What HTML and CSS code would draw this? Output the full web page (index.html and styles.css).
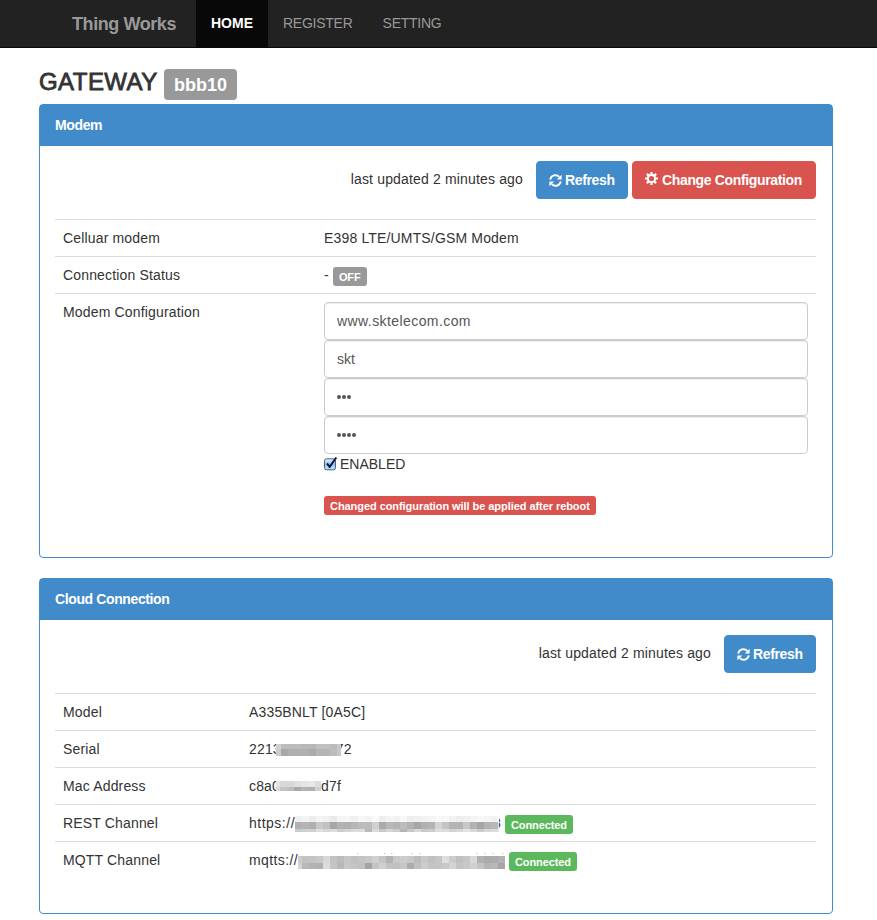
FILE: index.html
```html
<!DOCTYPE html>
<html lang="en">
<head>
<meta charset="utf-8">
<title>Thing Works</title>
<link rel="stylesheet" href="styles.css">
</head>
<body>
<svg class="defs" width="0" height="0">
  <symbol id="refresh" viewBox="0 0 14 14">
    <path d="M1.3 6A5.6 5.6 0 0 1 11 3.2M12.7 8A5.6 5.6 0 0 1 3 10.8" fill="none" stroke="#fff" stroke-width="2"/>
    <path d="M13.6 .8v5.2H8.4zM.4 13.2V8h5.2z" fill="#fff"/>
  </symbol>
  <symbol id="cog" viewBox="0 0 14 14">
    <circle cx="7" cy="7" r="3.9" fill="none" stroke="#fff" stroke-width="2.2"/>
    <path d="M7 0v2.6M7 11.4V14M0 7h2.6M11.4 7H14M2 2l1.9 1.9M10.1 10.1L12 12M2 12l1.9-1.9M10.1 3.9L12 2" stroke="#fff" stroke-width="2.4"/>
  </symbol>
</svg>
<nav class="navbar">
  <a class="brand">Thing Works</a>
  <a class="nav-item active">HOME</a>
  <a class="nav-item">REGISTER</a>
  <a class="nav-item">SETTING</a>
</nav>
<main class="container">
  <h3 class="title"><span class="name">GATEWAY</span><span class="device">bbb10</span></h3>
  <section class="panel modem">
    <header class="panel-heading">Modem</header>
    <div class="panel-body">
      <div class="toolbar">
        <span class="updated">last updated 2 minutes ago</span>
        <button class="btn primary"><svg class="icon"><use href="#refresh"/></svg>Refresh</button>
        <button class="btn danger"><svg class="icon cog"><use href="#cog"/></svg>Change Configuration</button>
      </div>
      <div class="row"><span>Celluar modem</span><span>E398 LTE/UMTS/GSM Modem</span></div>
      <div class="row"><span>Connection Status</span><span class="value">- <b class="label off">OFF</b></span></div>
      <div class="row"><span>Modem Configuration</span>
        <form class="config">
          <input class="control apn" type="text" value="www.sktelecom.com">
          <input class="control" type="text" value="skt">
          <div class="control dots"><i></i><i></i><i></i></div>
          <div class="control dots"><i></i><i></i><i></i><i></i></div>
          <label class="check">
            <svg width="14" height="14" viewBox="0 0 14 14"><defs><linearGradient id="aqua" x2="0" y2="1"><stop stop-color="#e9f3fd"/><stop offset=".5" stop-color="#8fc1f0"/><stop offset="1" stop-color="#c3ecff"/></linearGradient></defs><rect x=".5" y="1.8" width="11" height="11" rx="2" fill="url(#aqua)" stroke="#45618f"/><path d="M3 6.5l2.7 3.3L12.3 .5" fill="none" stroke="#0b1830" stroke-width="2"/></svg>
            <span>ENABLED</span>
          </label>
          <b class="label notice">Changed configuration will be applied after reboot</b>
        </form>
      </div>
    </div>
  </section>
  <section class="panel cloud">
    <header class="panel-heading">Cloud Connection</header>
    <div class="panel-body">
      <div class="toolbar">
        <span class="updated">last updated 2 minutes ago</span>
        <button class="btn primary"><svg class="icon"><use href="#refresh"/></svg>Refresh</button>
      </div>
      <div class="row"><span>Model</span><span>A335BNLT [0A5C]</span></div>
      <div class="row"><span>Serial</span><span class="value"><span>2213</span><svg class="mask serial" data-mosaic="serial" width="65" height="12"></svg><span>72</span></span></div>
      <div class="row"><span>Mac Address</span><span class="value"><span>c8a0</span><svg class="mask mac" data-mosaic="mac" width="45" height="10"></svg><span>d7f</span></span></div>
      <div class="row"><span>REST Channel</span><span class="value"><span class="rest-scheme">https://</span><svg class="mask rest" data-mosaic="rest" width="204" height="16"></svg><span>8</span><b class="label ok">Connected</b></span></div>
      <div class="row"><span>MQTT Channel</span><span class="value"><span class="mqtt-scheme">mqtts://</span><svg class="mask mqtt" data-mosaic="mqtt" width="207" height="16"></svg><b class="label ok">Connected</b></span></div>
    </div>
  </section>
</main>
<script src="mosaic.js"></script>
</body>
</html>
```
FILE: styles.css
```css
*{box-sizing:border-box}
body{margin:0;font:14px/20px "Liberation Sans",Arial,sans-serif;letter-spacing:.16px;color:#333;background:#fff}
.defs{display:block}
.navbar{height:48px;background:#222;border-bottom:1px solid #080808;display:flex;padding-left:57px;color:#999;letter-spacing:-.25px}
.brand{font-size:18px;font-weight:bold;width:139px;padding:14px 15px 0;letter-spacing:-.42px;white-space:nowrap}
.nav-item{padding:13px 15px 0}
.active{background:#080808;color:#fff;font-weight:bold;width:72px;letter-spacing:0}
.container{padding:0 44px 0 39px}
.title{margin:0;height:56px;display:flex;font-size:24px;font-weight:normal;padding-top:21px;line-height:26px}
.name{-webkit-text-stroke:.8px #333;width:125px;letter-spacing:.45px}
.device{background:#999;color:#fff;font-size:18px;font-weight:bold;letter-spacing:0;width:73px;height:31px;line-height:32px;text-align:center;border-radius:4px}
.panel{border:1px solid #428bca;border-radius:4px;margin-bottom:20px}
.modem{height:454px}
.cloud{height:336px}
.panel-heading{height:41px;background:#428bca;color:#fff;font-weight:bold;letter-spacing:-.38px;padding:10px 15px}
.panel-body{padding:15px 16px 15px 15px}
.toolbar{display:flex;justify-content:flex-end;height:58px;gap:4px}
.updated{line-height:36px;margin-right:9px;white-space:nowrap}
.btn{font:bold 14px/20px "Liberation Sans",Arial,sans-serif;letter-spacing:-.35px;color:#fff;height:38px;border:1px solid;border-radius:4px;padding:0 12px;display:flex;align-items:center;gap:3px;white-space:nowrap}
.primary{background:#428bca;border-color:#428bca;width:92px}
.danger{background:#d9534f;border-color:#d9534f;width:184px;gap:4px}
.icon{width:13px;height:13px;flex:none}
.cog{margin-bottom:4px}
.row{display:grid;grid-template-columns:261px 1fr;border-top:1px solid #ddd;padding:8px}
.cloud .row{grid-template-columns:186px 1fr}
.value{display:flex;white-space:pre;height:20px}
.label{font-size:11px;letter-spacing:-.06px;line-height:21px;height:19px;color:#fff;border-radius:3px;padding:0 6px;margin-top:2px;display:block;white-space:nowrap}
.off{background:#999;width:34px}
.ok{background:#5cb85c;width:68px;margin-left:4px;letter-spacing:-.1px}
.config{display:flex;flex-direction:column}
.control{height:38px;border:1px solid #ccc;border-radius:4px;padding:0 12px;font:14px "Liberation Sans",Arial,sans-serif;color:#555;box-shadow:inset 0 1px 1px rgba(0,0,0,.075);width:100%}
.apn{letter-spacing:.42px}
.dots{display:flex;gap:1px;align-items:center}
.dots i{width:4px;height:4px;border-radius:50%;background:#555}
.check{display:flex;gap:2px;height:42px;letter-spacing:0}
.check svg{margin-top:3px}
.notice{background:#d9534f;width:272px;margin-top:0}
.mask{position:relative;z-index:1;flex:none;margin-top:5px}
.serial{margin-left:-5px;margin-right:-5px}
.mac{margin-left:-4px}
.rest{margin-top:3px;margin-right:-6px}
.mqtt{margin-top:3px}
.rest-scheme{width:46px;letter-spacing:.5px}
.mqtt-scheme{width:49px;letter-spacing:.4px}
```
FILE: mosaic.js
```js
// Pixelated cover for private values: each band is [y, height, first column width, grey levels].
const bands = {
  serial: [
    [0, 5, 5, "d0 bc bc bc b8 b8 c0 c0 bc c8"],
    [5, 7, 5, "cc a8 b0 b0 b0 aa b4 b4 bc c8"]
  ],
  mac: [
    [0, 6, 4, "e4 d8 d8 e0 e4 e8 dc"],
    [6, 4, 4, "d8 c4 bc a8 b4 b0 d0"]
  ],
  rest: [
    [0, 6, 7, "f0 f4 ec f4 f0 ea f4 f6 f0 f8 f4 fa ee f4 f2 f8 ee f0 f2 f4 f8 f6 f2 ee f0 f4 f8 f6 f2 fa"],
    [6, 7, 7, "b2 b4 b0 c8 c0 a6 b2 b0 b6 bc bc d0 aa b8 b4 bc b2 a6 b0 b4 d4 c4 b4 b4 c8 b2 a6 b4 b8 e0"],
    [13, 3, 7, "cc d0 d0 e0 d8 dc cc d4 dc dc b8 dc c8 d4 cc b4 c8 d8 ca cc de dc d2 d8 e4 d8 cc d8 dc e8"]
  ],
  mqtt: [
    [3, 7, 4, "cc c2 c4 c8 d8 c2 bc c6 c0 c4 c8 d0 c4 b2 c8 cc c8 bc c8 c0 c6 de cc c0 c6 d8 b0 aa ac b2 c0"],
    [10, 6, 4, "d4 b8 b2 b0 dc c4 b8 c8 c4 c0 a4 c4 d0 c2 c0 c6 ac c0 cc c4 c4 c8 d4 c4 c8 d0 c4 b4 b8 a6 bc"]
  ]
};

function block(svg, x, y, width, height, fill) {
  const rect = document.createElementNS("http://www.w3.org/2000/svg", "rect");
  for (const [name, value] of Object.entries({ x, y, width, height, fill })) {
    rect.setAttribute(name, value);
  }
  svg.append(rect);
}

document.querySelectorAll("[data-mosaic]").forEach(svg => {
  for (const [y, height, first, levels] of bands[svg.dataset.mosaic]) {
    levels.split(" ").forEach((g, i) => {
      block(svg, i ? first + (i - 1) * 7 : 0, y, i ? 7 : first, height, "#" + g + g + g);
    });
  }
  if (svg.dataset.mosaic === "mqtt") {
    // Tops of tall letters that rise above the covered band.
    [59, 86, 93, 113, 121, 178, 186, 194, 204].forEach(x => block(svg, x, 0, 1.5, 1, "#c8c8c8"));
  }
});
```
